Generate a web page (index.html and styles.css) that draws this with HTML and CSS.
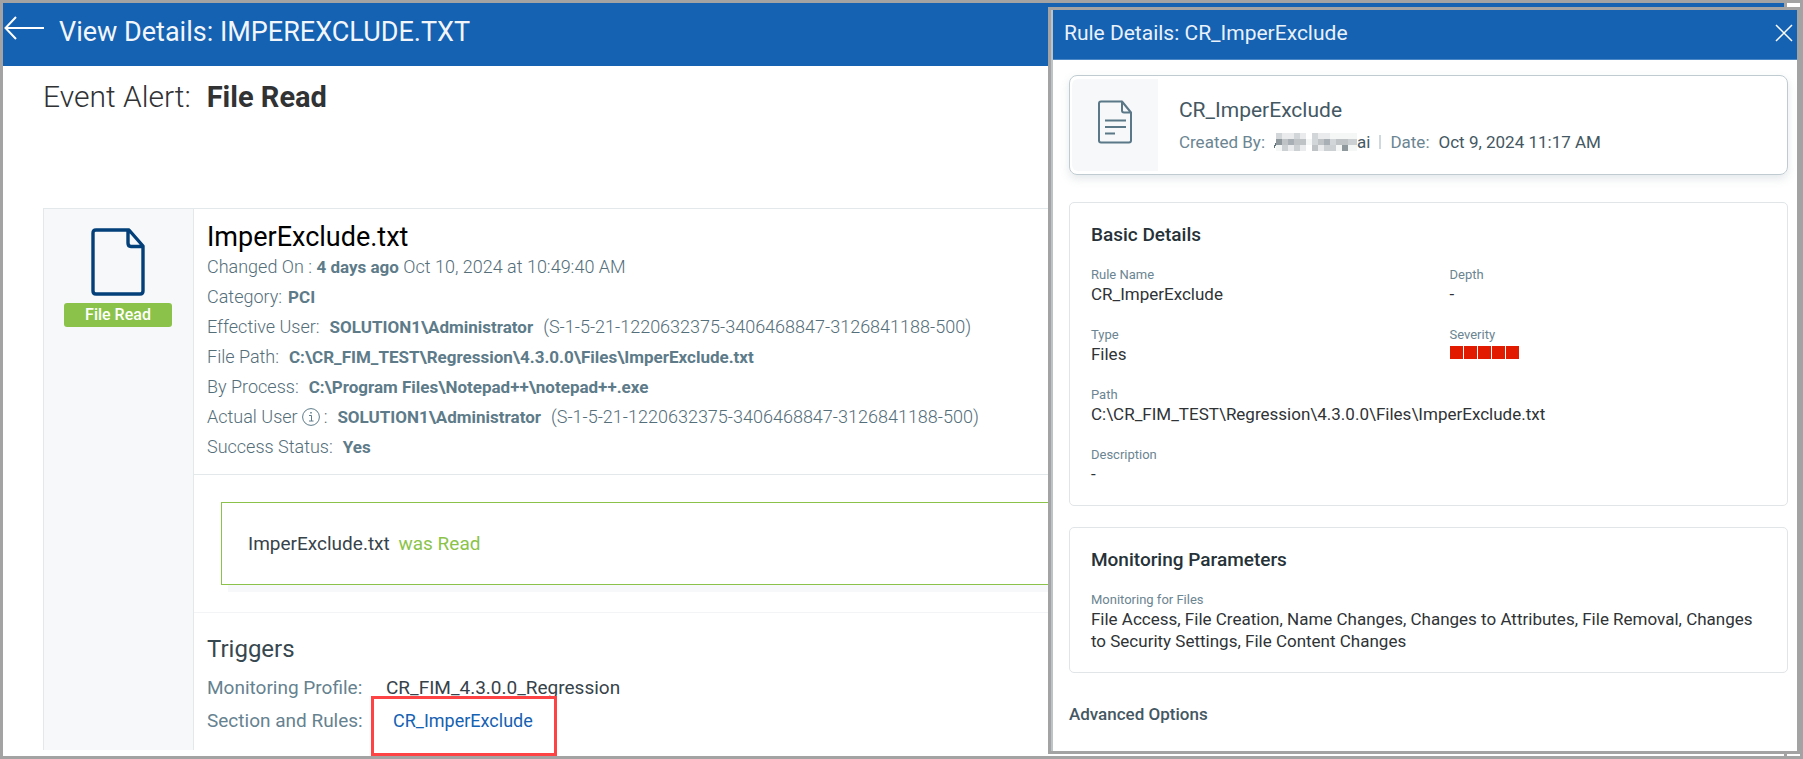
FILE: index.html
```
<!DOCTYPE html>
<html lang="en">
<head>
<meta charset="utf-8">
<title>View Details: IMPEREXCLUDE.TXT</title>
<link rel="stylesheet" href="styles.css">
</head>
<body>
<div class="window">
  <main class="page">
    <header class="page-header">
      <button class="back" type="button" aria-label="Back">
        <svg width="42" height="24" viewBox="0 0 42 24" fill="none" stroke="#fff" stroke-width="2"><path d="M1 12H40M12 1L1.500 12L12 23"/></svg>
      </button>
      <h1 class="page-title">View Details: IMPEREXCLUDE.TXT</h1>
    </header>

    <div class="page-body">
      <h2 class="alert">Event Alert: <strong>File Read</strong></h2>

      <section class="event">
        <aside class="event-side">
          <svg width="54" height="68" viewBox="0 0 54 68" fill="none" stroke="#033f79" stroke-width="3.400" stroke-linejoin="round"><path d="M38 2H5Q2 2 2 5V63Q2 66 5 66H49Q52 66 52 63V18ZM37 2V15Q37 18.500 40 18.500H52"/></svg>
          <span class="badge">File Read</span>
        </aside>

        <div class="event-main">
          <div class="details">
            <h3 class="file-name">ImperExclude.txt</h3>
            <p class="row"><span>Changed On : <b>4 days ago</b> Oct 10, 2024 at 10:49:40 AM</span></p>
            <p class="row tight"><span>Category:</span><b>PCI</b></p>
            <p class="row"><span>Effective User:</span><b>SOLUTION1\Administrator</b><span>(S-1-5-21-1220632375-3406468847-3126841188-500)</span></p>
            <p class="row"><span>File Path:</span><b>C:\CR_FIM_TEST\Regression\4.3.0.0\Files\ImperExclude.txt</b></p>
            <p class="row"><span>By Process:</span><b>C:\Program Files\Notepad++\notepad++.exe</b></p>
            <p class="row"><span class="with-icon">Actual User
              <svg width="18" height="18" viewBox="0 0 18 18" fill="none" stroke="#5d7b89"><circle cx="9" cy="9" r="8.400"/><path d="M7 7.500H9.500V13M7 13H11.500"/><path d="M9 4V5.500" stroke-width="1.500"/></svg>
              :</span><b>SOLUTION1\Administrator</b><span>(S-1-5-21-1220632375-3406468847-3126841188-500)</span></p>
            <p class="row"><span>Success Status:</span><b>Yes</b></p>
          </div>

          <div class="result">
            <p class="result-box">ImperExclude.txt <span class="read">was Read</span></p>
          </div>

          <div class="triggers">
            <h3 class="triggers-title">Triggers</h3>
            <dl class="trigger-list">
              <dt>Monitoring Profile:</dt><dd>CR_FIM_4.3.0.0_Regression</dd>
              <dt>Section and Rules:</dt><dd><a class="rule-link" href="#rule">CR_ImperExclude</a></dd>
            </dl>
          </div>
        </div>
      </section>
    </div>
  </main>

  <section class="panel" id="rule">
    <header class="panel-header">
      <h2 class="panel-title">Rule Details: CR_ImperExclude</h2>
      <button class="close" type="button" aria-label="Close">
        <svg width="18" height="18" viewBox="0 0 18 18" fill="none" stroke="#fff" stroke-width="1.500"><path d="M1 1L17 17M17 1L1 17"/></svg>
      </button>
    </header>

    <div class="panel-body">
      <article class="summary">
        <div class="summary-icon">
          <svg width="34" height="44" viewBox="0 0 34 44" fill="none" stroke="#5a7887" stroke-width="2" stroke-linejoin="round"><path d="M24 1.500H3Q1 1.500 1 3.500V40.500Q1 42.500 3 42.500H31Q33 42.500 33 40.500V12.500L24 1.500V10.500Q24 12.500 26 12.500H33M7 20.500H28M7 27H28M7 33.500H17"/></svg>
        </div>
        <div class="summary-text">
          <h3 class="summary-title">CR_ImperExclude</h3>
          <p class="meta">
            <span>Created By:</span>
            <span class="author">
              <svg width="83" height="18" viewBox="0 0 83 18" aria-hidden="true" shape-rendering="crispEdges">
                <path d="M0 15L3 8" stroke="#60727b" stroke-width="1.500"/>
                <path fill="#d3d6d8" d="M2 0h6v6h-6zM20 0h6v6h-6zM38 0h6v6h-6zM38 6h6v6h-6zM56 6h6v6h-6z"/>
                <path fill="#e9ebec" d="M8 0h6v6h-6zM14 0h6v6h-6zM26 0h6v6h-6zM44 0h12v6h-12zM14 12h6v6h-6zM26 12h6v6h-6zM44 12h6v6h-6z"/>
                <path fill="#f5f6f6" d="M56 0h28v6h-28zM2 12h6v6h-6zM32 6h6v6h-6zM62 12h6v6h-6zM74 12h10v6h-10z"/>
                <path fill="#8f989c" d="M2 6h6v6h-6zM68 12h6v6h-6z"/>
                <path fill="#a9b0b5" d="M14 6h6v6h-6zM50 6h6v6h-6z"/>
                <path fill="#bfc3c6" d="M8 6h6v6h-6zM20 6h12v6h-12zM44 6h6v6h-6zM62 6h12v6h-12zM38 12h6v6h-6z"/>
                <path fill="#cdd0d3" d="M74 6h10v6h-10zM8 12h6v6h-6zM20 12h6v6h-6zM50 12h12v6h-12z"/>
              </svg>ai</span>
            <span class="divider"></span>
            <span>Date:</span>
            <span class="date">Oct 9, 2024 11:17 AM</span>
          </p>
        </div>
      </article>

      <section class="card basic">
        <h3 class="card-title">Basic Details</h3>
        <dl class="fields">
          <div class="field"><dt>Rule Name</dt><dd>CR_ImperExclude</dd></div>
          <div class="field"><dt>Depth</dt><dd>-</dd></div>
          <div class="field"><dt>Type</dt><dd>Files</dd></div>
          <div class="field"><dt>Severity</dt><dd class="severity"><i></i><i></i><i></i><i></i><i></i></dd></div>
          <div class="field wide"><dt>Path</dt><dd>C:\CR_FIM_TEST\Regression\4.3.0.0\Files\ImperExclude.txt</dd></div>
          <div class="field wide"><dt>Description</dt><dd>-</dd></div>
        </dl>
      </section>

      <section class="card monitoring">
        <h3 class="card-title">Monitoring Parameters</h3>
        <dl class="fields">
          <div class="field wide"><dt>Monitoring for Files</dt><dd>File Access, File Creation, Name Changes, Changes to Attributes, File Removal, Changes to Security Settings, File Content Changes</dd></div>
        </dl>
      </section>

      <h3 class="advanced">Advanced Options</h3>
    </div>
  </section>
</div>
</body>
</html>
```
FILE: styles.css
```
* { box-sizing: border-box; }

body {
  margin: 0;
  background: #fff;
  font-family: Roboto, "Liberation Sans", sans-serif;
}

h1, h2, h3, p, dl, dd { margin: 0; font-weight: 400; }

button {
  display: block;
  padding: 0;
  border: 0;
  background: none;
  cursor: pointer;
}

svg { display: block; flex: none; }

.window {
  position: relative;
  display: flex;
  height: 100vh;
  padding-right: 13px;
  overflow: hidden;
  border: 3px solid #a3a3a3;
}

/* Event page */
.page {
  flex: 1;
  min-width: 0;
  display: flex;
  flex-direction: column;
  border-right: 3px solid #a3a3a3;
}

.page-header {
  display: flex;
  align-items: flex-start;
  gap: 13px;
  padding: 13px 0 18px 1px;
  background: #1561b2;
}

.page-title {
  color: #f2f6fb;
  font-size: 27px;
  line-height: 32px;
}

.page-body {
  flex: 1;
  display: flex;
  flex-direction: column;
  padding: 13px 0 6px 40px;
}

.alert {
  display: flex;
  gap: 16px;
  margin-bottom: 93px;
  color: #303234;
  font-size: 30px;
  font-weight: 300;
  line-height: 36px;
}

.alert strong { font-size: 29px; font-weight: 700; }

.event {
  flex: 1;
  display: flex;
  border-top: 1px solid #e3e9eb;
  border-left: 1px solid #e3e9eb;
}

.event-side {
  display: flex;
  flex-direction: column;
  align-items: center;
  gap: 7px;
  width: 150px;
  padding: 19px 1px 0 0;
  border-right: 1px solid #e3e9eb;
  background: #f7f8fa;
}

.badge {
  width: 108px;
  border-radius: 3px;
  background: #8bc34a;
  color: #fff;
  font-size: 16px;
  font-weight: 500;
  line-height: 24px;
  text-align: center;
}

.event-main { flex: 1; min-width: 0; }

.details {
  padding: 13px 13px 12px;
  border-bottom: 1px solid #e3e9eb;
  color: #546e7a;
}

.file-name {
  color: #000;
  font-size: 27px;
  line-height: 30px;
}

.row {
  display: flex;
  gap: 10px;
  font-size: 18px;
  font-weight: 300;
  line-height: 30px;
  white-space: nowrap;
}

.row.tight { gap: 6px; }
.row b { color: #5d7b89; font-size: 17px; font-weight: 700; }
.with-icon { display: flex; align-items: center; gap: 4px; }

.result {
  padding: 27px;
  border-bottom: 1px solid #f2f4f5;
}

.result-box {
  padding: 29px 26px;
  border: 1px solid #8bc34a;
  background: #fff;
  box-shadow: 7px 7px 0 #f7f8fa;
  color: #37434a;
  font-size: 19px;
  line-height: 23px;
}

.read { margin-left: 4px; color: #8bc34a; }

.triggers { padding: 22px 13px 0; }

.triggers-title {
  margin-bottom: 8px;
  color: #37474f;
  font-size: 24px;
  line-height: 28px;
}

.trigger-list {
  display: grid;
  grid-template-columns: 179px 1fr;
  color: #668290;
  font-size: 19px;
  line-height: 33px;
}

.trigger-list dd { color: #37434a; }

.rule-link {
  position: relative;
  display: inline-block;
  margin-left: 7px;
  color: #1561b2;
  font-size: 18px;
  text-decoration: none;
}

/* Highlight frame drawn over the neighbouring rows */
.rule-link::after {
  content: "";
  position: absolute;
  inset: -8px -24px -19px -22px;
  border: 3px solid #fd4343;
}

/* Rule panel */
.panel {
  position: absolute;
  top: 4px;
  right: 0;
  bottom: 2px;
  left: 58.15%;
  border: 3px solid #a3a3a3;
  background: #fff;
  box-shadow: inset 2px 0 0 #bcc4c8;
}

.panel-header {
  display: flex;
  align-items: flex-start;
  justify-content: space-between;
  margin-left: 2px;
  padding: 11px 4px 13px 11px;
  border-bottom: 1px solid #4c87c6;
  background: #1561b2;
}

.panel-title {
  color: #e9f1fa;
  font-size: 21px;
  line-height: 25px;
}

.close { margin-top: 3px; }

.panel-body { padding: 15px 9px 0 18px; }

.summary {
  display: flex;
  margin-bottom: 27px;
  padding: 3px 2px;
  border: 1px solid #bfcbd1;
  border-radius: 8px;
  box-shadow: 0 4px 10px rgba(84, 110, 122, .16);
}

.summary-icon {
  display: flex;
  justify-content: center;
  width: 86px;
  padding-top: 21px;
  border-radius: 6px 0 0 6px;
  background: #f7f8fa;
}

.summary-text { padding: 18px 0 18px 21px; }

.summary-title {
  margin-bottom: 8px;
  color: #445863;
  font-size: 21px;
  line-height: 26px;
}

.meta {
  display: flex;
  align-items: center;
  gap: 9px;
  color: #6b8592;
  font-size: 17px;
  line-height: 22px;
}

.author { display: flex; align-items: center; color: #445863; }
.divider { width: 2px; height: 14px; background: #cfd8dc; }
.date { color: #445863; }

.card {
  padding: 20px 21px;
  border: 1px solid #e1e5e7;
  border-radius: 5px;
}

.basic { margin-bottom: 21px; }

.card-title {
  margin-bottom: 20px;
  color: #263238;
  font-size: 19px;
  font-weight: 500;
  line-height: 24px;
}

.fields {
  display: grid;
  grid-template-columns: 1fr 1fr;
  gap: 22px 42px;
}

.field.wide { grid-column: 1 / -1; }

.field dt {
  color: #6b8592;
  font-size: 13px;
  line-height: 16px;
}

.field dd {
  color: #2f3336;
  font-size: 17px;
  line-height: 22px;
}

.field .severity { display: flex; gap: 1px; padding: 3px 0 0 1px; }
.severity i { width: 13px; height: 13px; background: #e21b00; }

.advanced {
  margin-top: 30px;
  color: #445863;
  font-size: 17px;
  font-weight: 500;
  line-height: 22px;
}
```
